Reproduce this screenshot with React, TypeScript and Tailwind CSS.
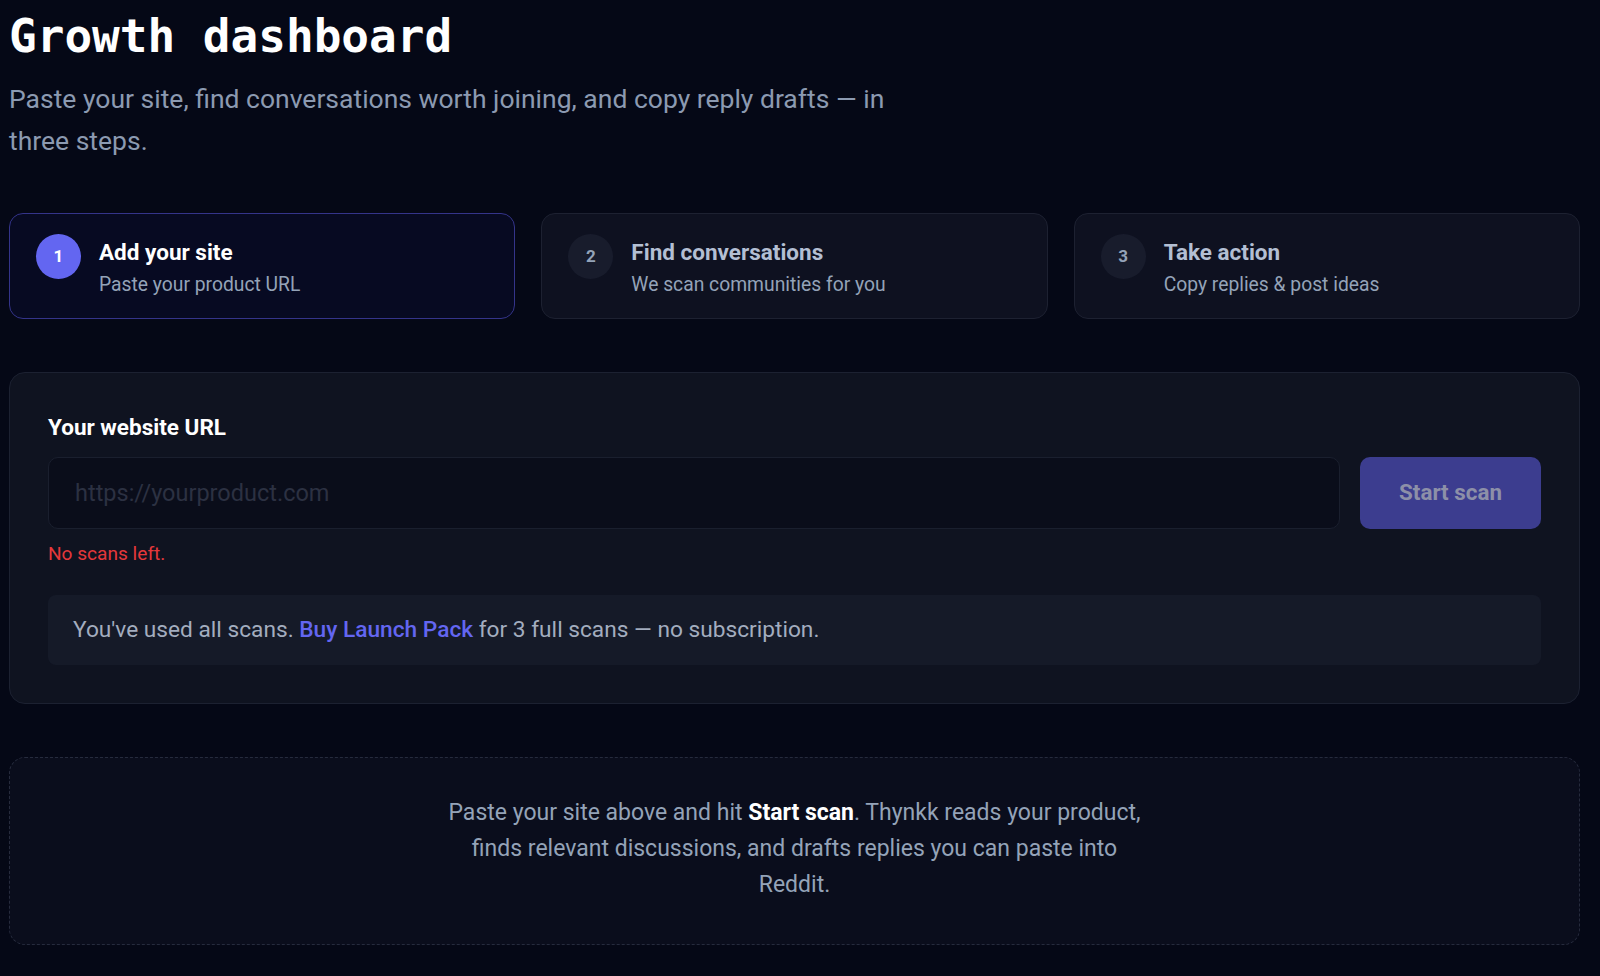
import { useState } from "react"

const steps = [
  { n: 1, title: "Add your site", sub: "Paste your product URL" },
  { n: 2, title: "Find conversations", sub: "We scan communities for you" },
  { n: 3, title: "Take action", sub: "Copy replies & post ideas" },
]

function StepCard({ n, title, sub, active }: { n: number; title: string; sub: string; active: boolean }) {
  return (
    <div
      className={
        active
          ? "flex items-start gap-[18px] rounded-[14px] border border-[#34348a] bg-[#070a22] pl-[26px] pr-[25px] py-[19px]"
          : "flex items-start gap-[18px] rounded-[14px] border border-[#1d2131] bg-[#0e1120] pl-[26px] pr-[25px] py-[19px]"
      }
    >
      <div
        className={
          active
            ? "mt-[1px] flex h-[45px] w-[45px] shrink-0 items-center justify-center rounded-full bg-[#6366f1] text-[17px] font-bold text-white"
            : "mt-[1px] flex h-[45px] w-[45px] shrink-0 items-center justify-center rounded-full bg-[#181c2c] text-[17px] font-bold text-[#94a3b8]"
        }
      >
        {n}
      </div>
      <div className="flex flex-col">
        <span
          className={
            active
              ? "text-[22.5px] font-bold leading-[38px] text-white"
              : "text-[22.5px] font-bold leading-[38px] text-[#b3bfd3]"
          }
        >
          {title}
        </span>
        <span className="text-[19.3px] leading-[28px] text-[#94a3b8]">{sub}</span>
      </div>
    </div>
  )
}

export default function App() {
  const [url, setUrl] = useState("")

  return (
    <div className="min-h-screen bg-[#050816] pl-[9px] pr-[20px] pt-[8px] pb-10 font-['Roboto','Noto_Sans',sans-serif]">
      {/* Header */}
      <h1 className="font-['DejaVu_Sans_Mono',monospace] text-[46px] font-bold leading-[56px] text-white">
        Growth dashboard
      </h1>
      <p className="mt-[14px] max-w-[910px] text-[26.5px] leading-[42px] text-[#8c9ab1]">
        Paste your site, find conversations worth joining, and copy reply drafts — in three steps.
      </p>

      {/* Steps */}
      <div className="mt-[51px] grid grid-cols-3 gap-[26px]">
        {steps.map((s) => (
          <StepCard key={s.n} {...s} active={s.n === 1} />
        ))}
      </div>

      {/* URL form */}
      <div className="mt-[53px] rounded-[16px] border border-[#1c2131] bg-[#0f1320] p-[38px]">
        <label className="block text-[22.5px] font-bold leading-[32px] text-white">Your website URL</label>
        <div className="mt-[14px] flex gap-[20px]">
          <input
            value={url}
            onChange={(e) => setUrl(e.target.value)}
            placeholder="https://yourproduct.com"
            className="h-[72px] flex-1 rounded-[10px] border border-[#1a1f2e] bg-[#0a0d1a] px-[26px] text-[23.5px] text-white outline-none placeholder:text-[#2c3142]"
          />
          <button
            disabled
            className="h-[72px] w-[181px] rounded-[10px] bg-[#3c3d8f] text-[22.4px] font-bold text-[#8d90a8]"
          >
            Start scan
          </button>
        </div>
        <p className="mt-[13px] text-[19.1px] leading-[24px] text-[#e5383b]">No scans left.</p>
        <div className="mt-[29px] flex h-[70px] items-center rounded-[8px] bg-[#151a28] px-[25px] text-[22.7px] text-[#a3adbf]">
          <span>
            You've used all scans.{" "}
            <a href="#" className="font-medium text-[#6366f1]">
              Buy Launch Pack
            </a>{" "}
            for 3 full scans — no subscription.
          </span>
        </div>
      </div>

      {/* Empty state */}
      <div className="mt-[53px] rounded-[16px] border border-dashed border-[#262b3d] bg-[#0a0d1c] pt-[37px] pb-[41px]">
        <p className="mx-auto max-w-[715px] text-center text-[23px] leading-[36px] text-[#94a3b8]">
          Paste your site above and hit <strong className="font-bold text-white">Start scan</strong>. Thynkk reads your
          product, finds relevant discussions, and drafts replies you can paste into Reddit.
        </p>
      </div>
    </div>
  )
}
